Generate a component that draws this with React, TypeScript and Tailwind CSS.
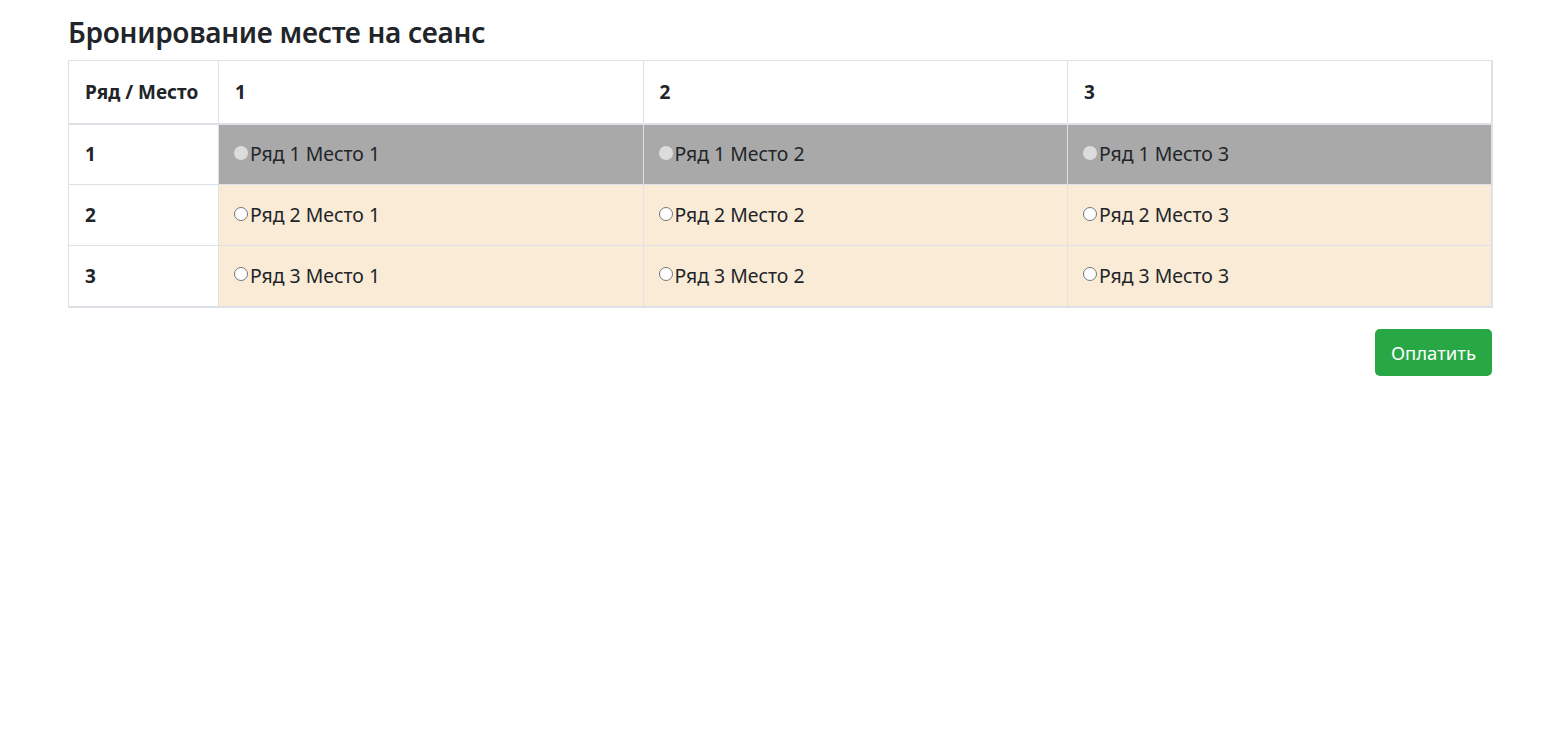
import React from "react";

const rows = [1, 2, 3];
const seats = [1, 2, 3];

const Radio = ({ disabled }: { disabled: boolean }) =>
  disabled ? (
    <span className="inline-block shrink-0 w-[14px] h-[14px] rounded-full bg-[#dcdcdc] -mt-[3px]" />
  ) : (
    <span className="inline-block shrink-0 w-[14px] h-[14px] rounded-full bg-white border border-[#767676] -mt-[3px]" />
  );

export default function App() {
  return (
    <div className="min-h-screen bg-white text-[#212529] font-['Noto_Sans',sans-serif]">
      <div className="ml-[68px] w-[1424px] pt-[12px]">
        <h4 className="text-[28px] font-semibold leading-[40px] mb-[8px] tracking-[-0.3px]">Бронирование месте на сеанс</h4>

        <table className="w-[1425px] border-collapse border border-r-2 border-b-2 border-[#dee2e6] table-fixed">
          <colgroup>
            <col className="w-[150px]" />
            <col />
            <col />
            <col />
          </colgroup>
          <thead>
            <tr className="h-[63px]">
              <th className="border border-[#dee2e6] border-b-2 text-left px-4 font-bold text-[19px]">Ряд / Место</th>
              {seats.map((s) => (
                <th key={s} className="border border-[#dee2e6] border-b-2 text-left px-4 font-bold text-[19px]">
                  {s}
                </th>
              ))}
            </tr>
          </thead>
          <tbody>
            {rows.map((r) => (
              <tr key={r} className="h-[61px]">
                <td className="border border-[#dee2e6] px-4 font-bold text-[19px]">{r}</td>
                {seats.map((s) => {
                  const busy = r === 1;
                  return (
                    <td
                      key={s}
                      className={
                        busy
                          ? "border border-[#dee2e6] px-[15px] bg-[#a9a9a9]"
                          : "border border-[#dee2e6] px-[15px] bg-[#faebd7]"
                      }
                    >
                      <label className="flex items-center text-[19.4px] leading-[28px]">
                        <Radio disabled={busy} />
                        <span className="ml-[2px]">
                          Ряд {r} Место {s}
                        </span>
                      </label>
                    </td>
                  );
                })}
              </tr>
            ))}
          </tbody>
        </table>

        <div className="flex justify-end mt-[21px]">
          <button className="bg-[#28a745] text-white text-[18.5px] leading-[27px] pl-[16px] pr-[16px] py-[10px] rounded-[5px]">
            Оплатить
          </button>
        </div>
      </div>
    </div>
  );
}
